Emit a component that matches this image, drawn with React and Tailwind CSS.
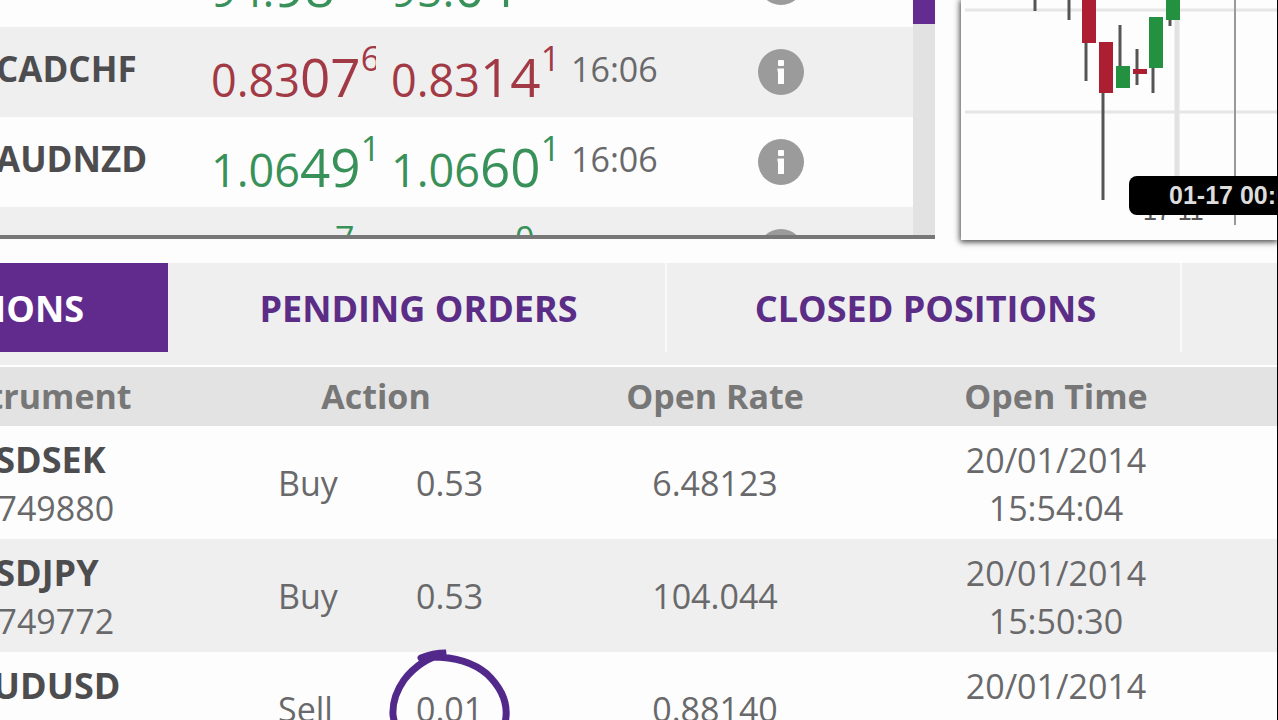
const quotes = [
  { symbol: 'AUDJPY', time: '16:06', up: true, bid: ['94.', '98', '4'], ask: ['95.', '04', '2'] },
  { symbol: 'CADCHF', time: '16:06', up: false, bid: ['0.83', '07', '6'], ask: ['0.83', '14', '1'] },
  { symbol: 'AUDNZD', time: '16:06', up: true, bid: ['1.06', '49', '1'], ask: ['1.06', '60', '1'] },
  { symbol: 'CADJPY', time: '16:06', up: true, bid: ['95.', '11', '7'], ask: ['95.', '17', '0'] },
];

const positions = [
  { symbol: 'USDSEK', id: '1749880', action: 'Buy', amount: '0.53', rate: '6.48123', date: '20/01/2014', time: '15:54:04' },
  { symbol: 'USDJPY', id: '1749772', action: 'Buy', amount: '0.53', rate: '104.044', date: '20/01/2014', time: '15:50:30' },
  { symbol: 'AUDUSD', id: '1749668', action: 'Sell', amount: '0.01', rate: '0.88140', date: '20/01/2014', time: '13:46:16', marked: true },
];

// x is the wick centre; bodies are 14px wide
const candles = [
  { x: 74, wick: [0, 11] },
  { x: 108, wick: [0, 20] },
  { x: 125, wick: [0, 81], body: [0, 43], color: '#ac1f33' },
  { x: 142, wick: [42, 200], body: [42, 93], color: '#ac1f33' },
  { x: 159, wick: [25, 88], body: [66, 88], color: '#23913f' },
  { x: 176, wick: [49, 85], body: [69, 74], color: '#ac1f33' },
  { x: 192, wick: [17, 93], body: [17, 68], color: '#23913f' },
  { x: 209, wick: [0, 26], body: [0, 20], color: '#23913f' },
];

function InfoIcon() {
  return (
    <svg className="block size-[46px]" viewBox="0 0 46 46" aria-hidden="true">
      <circle cx="23" cy="23" r="23" fill="#9b9b9b" />
      <rect x="20" y="11" width="6" height="6" rx="1" fill="#fff" />
      <path d="M19.5 19.5H26V35H20V22.5H19.5Z" fill="#fff" />
    </svg>
  );
}

function Rate({ value, up }) {
  const [small, big, pip] = value;
  return (
    <div
      className={`w-[165px] overflow-hidden whitespace-nowrap text-[53px] leading-[60px] ${
        up ? 'text-[#39915a]' : 'text-[#a23a46]'
      }`}
    >
      <span className="text-[45px] leading-none">{small}</span>
      <span className="leading-none">{big}</span>
      <span className="align-[26px] text-[34px] leading-none">{pip}</span>
    </div>
  );
}

function Quotes() {
  return (
    <section className="flex h-[239px] min-w-0 grow overflow-hidden border-b-4 border-[#777]">
      <div className="min-w-0 grow">
        <table className="-mt-[63px] -ml-1 w-[calc(100%+4px)] table-fixed">
          <colgroup>
            <col className="w-[215px]" />
            <col className="w-[180px]" />
            <col className="w-[180px]" />
            <col className="w-[187px]" />
            <col />
          </colgroup>
          <tbody>
            {quotes.map((quote) => (
              <tr key={quote.symbol} className="h-[90px] align-top odd:bg-[#fdfdfd] even:bg-[#efefef]">
                <td className="pt-[18px] text-[35px] leading-[48px] font-bold text-[#4d4d4f]">{quote.symbol}</td>
                <td className="pt-[14px]">
                  <Rate value={quote.bid} up={quote.up} />
                </td>
                <td className="pt-[14px]">
                  <Rate value={quote.ask} up={quote.up} />
                </td>
                <td className="pt-[18px] leading-[48px]">{quote.time}</td>
                <td className="pt-[22px]">
                  <button type="button" aria-label={`${quote.symbol} info`} className="block">
                    <InfoIcon />
                  </button>
                </td>
              </tr>
            ))}
          </tbody>
        </table>
      </div>
      <div className="w-[22px] shrink-0 bg-[#e2e2e2]">
        <div className="h-6 bg-[#642c90]" />
      </div>
    </section>
  );
}

function Chart() {
  return (
    <section className="relative h-[240px] w-[316px] shrink-0 bg-[#fdfdfd] shadow-[0_1px_6px_1px_rgba(0,0,0,0.75)]">
      <svg className="block h-full w-full" viewBox="0 0 316 240" preserveAspectRatio="xMinYMin slice">
        <path d="M4 10H316M4 112H316" stroke="#e6e6e6" strokeWidth="3" />
        <path d="M216 20V180" stroke="#e2e2e2" strokeWidth="5" />
        <path d="M274 0V225" stroke="#999" strokeWidth="2" />
        {candles.map(({ x, wick, body, color }) => (
          <g key={x}>
            <path d={`M${x} ${wick[0]}V${wick[1]}`} stroke="#555" strokeWidth="3" />
            {body && <rect x={x - 4} y={body[0]} width="14" height={body[1] - body[0]} fill={color} />}
          </g>
        ))}
        <text x="182" y="220" fontSize="25" fontFamily="Liberation Sans, sans-serif" fill="#555">
          17 11
        </text>
      </svg>
      <div className="absolute top-44 right-0 left-[168px] h-[39px] overflow-hidden rounded-l-lg bg-black pl-10 font-['Liberation_Sans',sans-serif] text-[25px] leading-[38px] font-bold whitespace-nowrap text-[#ddd]">
        01-17 00:00
      </div>
    </section>
  );
}

function Tabs() {
  return (
    <nav className="flex h-[102px] items-start bg-[#efefef] text-[36px] font-bold whitespace-nowrap text-[#5b2d86]">
      <button
        type="button"
        className="flex h-[89px] w-[168px] items-center justify-end overflow-hidden bg-[#612b8e] pt-0.5 pr-[84px] text-white"
      >
        OPEN POSITIONS
      </button>
      <button type="button" className="h-[89px] w-[499px] border-r-2 border-[#fafafa] pt-0.5 pl-1">
        PENDING ORDERS
      </button>
      <button type="button" className="h-[89px] w-[515px] border-r-2 border-[#fafafa] pt-0.5 pl-1">
        CLOSED POSITIONS
      </button>
    </nav>
  );
}

function Positions() {
  return (
    <table className="-ml-8 w-[calc(100%+32px)] table-fixed border-t-2 border-white">
      <colgroup>
        <col className="w-[237px]" />
        <col className="w-[342px]" />
        <col className="w-[336px]" />
        <col className="w-[346px]" />
        <col />
      </colgroup>
      <thead>
        <tr className="h-[60px] bg-[#e3e3e3] text-[#777]">
          <th>
            <div className="-ml-[30px] text-left">Instrument</div>
          </th>
          <th>Action</th>
          <th>Open Rate</th>
          <th>Open Time</th>
          <th />
        </tr>
      </thead>
      <tbody>
        {positions.map((position) => (
          <tr key={position.id} className="h-[113px] leading-[48px] odd:bg-[#fdfdfd] even:bg-[#efefef]">
            <td className="pt-0.5">
              <div className="text-[36px] font-bold text-[#4d4d4f]">{position.symbol}</div>
              <div className="pl-[10px]">{position.id}</div>
            </td>
            <td className="pl-[73px]">
              <div className="flex">
                <span className="w-[138px]">{position.action}</span>
                <span className="relative">
                  {position.amount}
                  {position.marked && (
                    <svg
                      className="absolute -top-[38px] -left-7 h-[124px] w-[124px]"
                      viewBox="0 0 124 124"
                      fill="none"
                      stroke="#52298a"
                      strokeWidth="7"
                      strokeLinecap="round"
                      aria-hidden="true"
                    >
                      <path d="M33 11Q45 6 58 6Q32 12 16 33Q4 50 5 68Q11 108 58 112Q102 112 117 76Q123 50 99 27Q78 9 40 10" />
                    </svg>
                  )}
                </span>
              </div>
            </td>
            <td className="text-center">{position.rate}</td>
            <td className="pt-0.5 text-center">
              <div>{position.date}</div>
              <div>{position.time}</div>
            </td>
            <td />
          </tr>
        ))}
      </tbody>
    </table>
  );
}

function App() {
  return (
    <div className="h-screen overflow-hidden border-r border-black bg-[#fdfdfd] font-['Open_Sans',sans-serif] text-[34px] text-[#69696b]">
      <div className="mb-[23px] flex gap-[26px]">
        <Quotes />
        <Chart />
      </div>
      <Tabs />
      <Positions />
    </div>
  );
}

export default App;
